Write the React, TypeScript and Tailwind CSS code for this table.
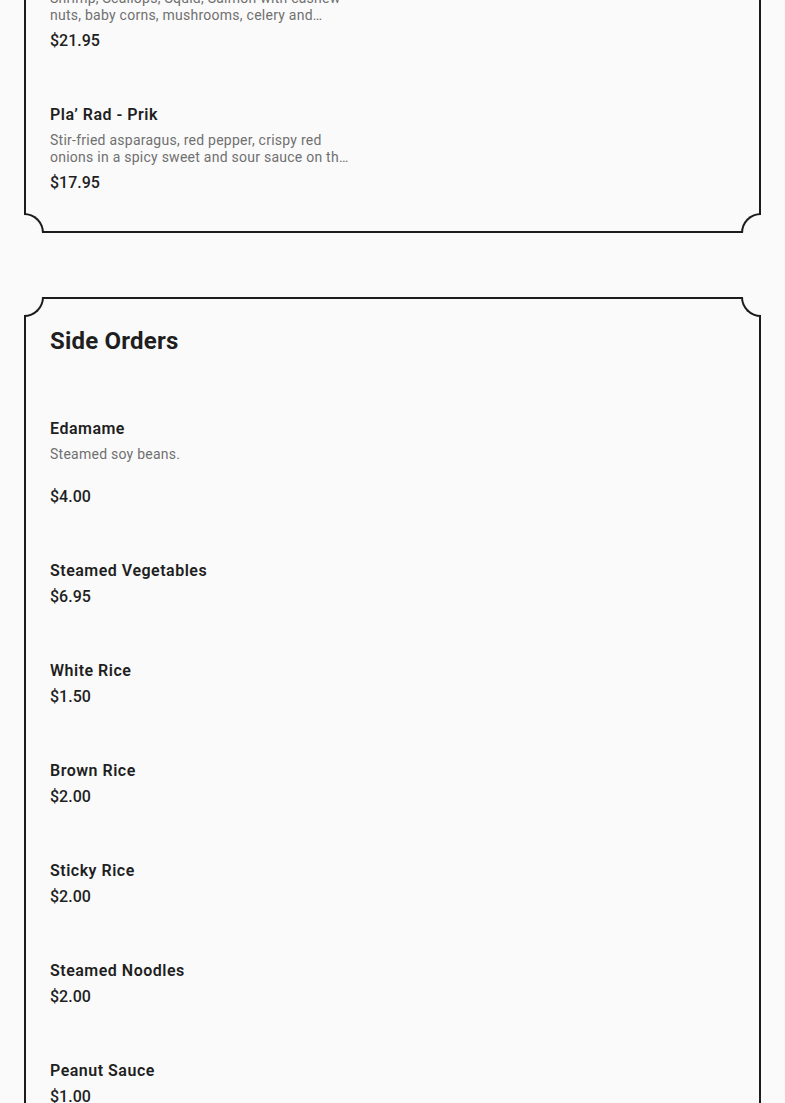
import React from "react";

type Item = { name: string; desc?: string; price: string };

const card1: Item[] = [
  {
    name: "Seafood Cashew Nut",
    desc: "Shrimp, Scallops, Squid, Salmon with cashew nuts, baby corns, mushrooms, celery and onions in a light brown sauce.",
    price: "$21.95",
  },
  {
    name: "Pla’ Rad - Prik",
    desc: "Stir-fried asparagus, red pepper, crispy red onions in a spicy sweet and sour sauce on the fried fish fillet.",
    price: "$17.95",
  },
];

const card2: Item[] = [
  { name: "Edamame", desc: "Steamed soy beans.", price: "$4.00" },
  { name: "Steamed Vegetables", price: "$6.95" },
  { name: "White Rice", price: "$1.50" },
  { name: "Brown Rice", price: "$2.00" },
  { name: "Sticky Rice", price: "$2.00" },
  { name: "Steamed Noodles", price: "$2.00" },
  { name: "Peanut Sauce", price: "$1.00" },
  { name: "Cucumber Salad", price: "$3.00" },
];

function Corners() {
  return (
    <>
      <div className="absolute -top-[2px] -left-[2px] w-[20px] h-[20px] bg-[#fafafa] border-r-2 border-b-2 border-[#1c1c1c] rounded-br-[20px]" />
      <div className="absolute -top-[2px] -right-[2px] w-[20px] h-[20px] bg-[#fafafa] border-l-2 border-b-2 border-[#1c1c1c] rounded-bl-[20px]" />
      <div className="absolute -bottom-[2px] -left-[2px] w-[20px] h-[20px] bg-[#fafafa] border-r-2 border-t-2 border-[#1c1c1c] rounded-tr-[20px]" />
      <div className="absolute -bottom-[2px] -right-[2px] w-[20px] h-[20px] bg-[#fafafa] border-l-2 border-t-2 border-[#1c1c1c] rounded-tl-[20px]" />
    </>
  );
}

function MenuItem({ item }: { item: Item }) {
  return (
    <div className="flex flex-col">
      <div className="text-[16px] leading-[24px] font-semibold tracking-[0.5px] text-[#1f1f1f]">{item.name}</div>
      {item.desc && (
        <div className="mt-[5px] w-[304px] h-[34px] text-[14px] leading-[17px] text-[#707070] tracking-[0.25px] line-clamp-2">
          {item.desc}
        </div>
      )}
      <div className={`${item.desc ? "mt-[5px]" : "mt-[2px]"} text-[16px] leading-[24px] font-medium text-[#1f1f1f]`}>
        {item.price}
      </div>
    </div>
  );
}

export default function App() {
  return (
    <div
      className="min-h-screen bg-[#fafafa] px-6 pb-16 overflow-hidden"
      style={{ fontFamily: "Roboto, 'Noto Sans', sans-serif" }}
    >
      <div className="relative mt-[-65px] border-2 border-[#1c1c1c] px-6 pt-6 pb-[36px]">
        <Corners />
        <div className="flex flex-col gap-[50px]">
          {card1.map((it) => (
            <MenuItem key={it.name} item={it} />
          ))}
        </div>
      </div>

      <div className="relative mt-16 border-2 border-[#1c1c1c] px-6 pt-[26px] pb-[37px]">
        <Corners />
        <h2 className="text-[24px] leading-[32px] font-bold tracking-[0.2px] text-[#1f1f1f] mb-[60px]">Side Orders</h2>
        <div className="flex flex-col gap-[50px]">
          {card2.map((it) => (
            <MenuItem key={it.name} item={it} />
          ))}
        </div>
      </div>
    </div>
  );
}
